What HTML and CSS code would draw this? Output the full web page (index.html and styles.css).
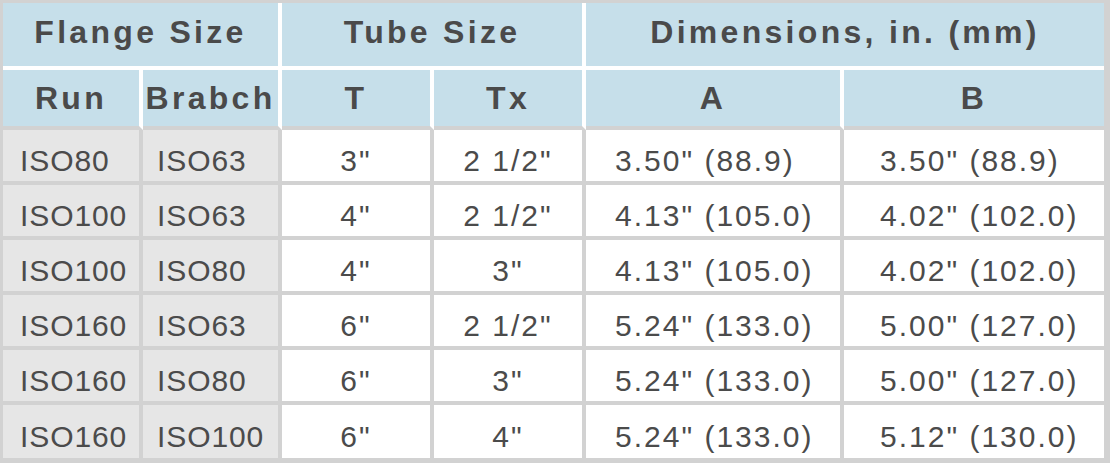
FILE: index.html
```html
<!DOCTYPE html>
<html lang="en">
<head>
<meta charset="utf-8">
<title>Flange Sizes</title>
<link rel="stylesheet" href="styles.css">
</head>
<body>
<table class="spec">
  <colgroup>
    <col class="c1"><col class="c2"><col class="c3"><col class="c4"><col class="c5"><col class="c6">
  </colgroup>
  <thead>
    <tr class="h1">
      <th colspan="2">Flange Size</th>
      <th colspan="2">Tube Size</th>
      <th colspan="2" class="last">Dimensions, in. (mm)</th>
    </tr>
    <tr class="h2">
      <th>Run</th><th>Brabch</th><th>T</th><th>Tx</th><th>A</th><th class="last">B</th>
    </tr>
  </thead>
  <tbody>
    <tr><td class="g l1">ISO80</td><td class="g l2">ISO63</td><td class="ctr">3"</td><td class="ctr">2 1/2"</td><td class="l5">3.50" (88.9)</td><td class="l6 last">3.50" (88.9)</td></tr>
    <tr><td class="g l1">ISO100</td><td class="g l2">ISO63</td><td class="ctr">4"</td><td class="ctr">2 1/2"</td><td class="l5">4.13" (105.0)</td><td class="l6 last">4.02" (102.0)</td></tr>
    <tr><td class="g l1">ISO100</td><td class="g l2">ISO80</td><td class="ctr">4"</td><td class="ctr">3"</td><td class="l5">4.13" (105.0)</td><td class="l6 last">4.02" (102.0)</td></tr>
    <tr><td class="g l1">ISO160</td><td class="g l2">ISO63</td><td class="ctr">6"</td><td class="ctr">2 1/2"</td><td class="l5">5.24" (133.0)</td><td class="l6 last">5.00" (127.0)</td></tr>
    <tr><td class="g l1">ISO160</td><td class="g l2">ISO80</td><td class="ctr">6"</td><td class="ctr">3"</td><td class="l5">5.24" (133.0)</td><td class="l6 last">5.00" (127.0)</td></tr>
    <tr class="end"><td class="g l1">ISO160</td><td class="g l2">ISO100</td><td class="ctr">6"</td><td class="ctr">4"</td><td class="l5">5.24" (133.0)</td><td class="l6 last">5.12" (130.0)</td></tr>
  </tbody>
</table>
</body>
</html>
```

FILE: styles.css
```css
html, body {
  margin: 0;
  padding: 0;
  background: #ffffff;
}

.spec {
  width: 1110px;
  table-layout: fixed;
  border-collapse: separate;
  border-spacing: 0;
  border-style: solid;
  border-color: #d2d2d2;
  border-width: 3px 6px 5px 3px;
  font-family: "Liberation Sans", Arial, sans-serif;
  color: #4b4b4b;
}

.c1 { width: 140px; }
.c2 { width: 139px; }
.c3 { width: 152px; }
.c4 { width: 152px; }
.c5 { width: 258px; }
.c6 { width: 260px; }

.spec th {
  background: #c6dfea;
  font-weight: bold;
  font-size: 32px;
  letter-spacing: 3.3px;
  text-align: center;
  vertical-align: middle;
  padding: 0;
  border-right: 4px solid #ffffff;
  border-bottom: 4px solid #ffffff;
  white-space: nowrap;
  color: #4a4a4a;
}

.spec .h1 th {
  height: 59px;
  padding-bottom: 4px;
}

.spec .h2 th {
  height: 56px;
  border-bottom-color: #d2d2d2;
}

.spec th.last,
.spec td.last {
  border-right: none;
}

.spec td {
  height: 40px;
  padding: 11px 0 0 0;
  font-size: 30px;
  letter-spacing: 2px;
  vertical-align: middle;
  white-space: nowrap;
  border-right: 4px solid #d2d2d2;
  border-bottom: 4px solid #d2d2d2;
  background: #ffffff;
}

.spec .end td {
  height: 42px;
  border-bottom: none;
}

.spec td.g {
  background: #e6e6e6;
  letter-spacing: 0.9px;
}
.spec td.ctr { text-align: center; }
.spec td.l1 { padding-left: 17px; }
.spec td.l2 { padding-left: 14px; }
.spec td.l5 { padding-left: 29px; }
.spec td.l6 { padding-left: 36px; }
```
